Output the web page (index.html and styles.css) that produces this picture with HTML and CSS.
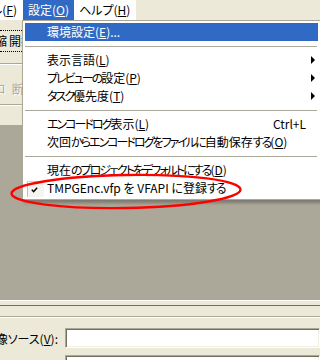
FILE: index.html
```html
<!DOCTYPE html>
<html>
<head>
    <meta charset="utf-8" />
    <title>TMPGEnc 設定メニュー</title>
    <link rel="stylesheet" href="styles.css">
</head>
<body>
    <div class="menubar">
        <div class="bar-items">
            <span class="bar-item first">ファイル(<u>F</u>)</span>
            <span class="bar-item open">設定(<u>O</u>)</span>
            <span class="bar-item">ヘルプ(<u>H</u>)</span>
        </div>
    </div>

    <div class="toolbar">
        <div class="tool-row buttons">
            <span class="tool-btn cut">圧縮</span>
            <span class="tool-btn">開始</span>
        </div>
        <div class="tool-sep"></div>
        <div class="tool-row disabled">
            <span class="tool-btn cut2">プロ</span>
            <span class="tool-btn">断</span>
        </div>
    </div>

    <div class="workspace"></div>

    <div class="panel">
        <div class="panel-strip"></div>
        <div class="panel-form">
            <div class="field">
                <label class="field-label">映像ソース(<u>V</u>):</label>
                <div class="field-input"></div>
            </div>
            <div class="field">
                <label class="field-label">音声ソース(<u>U</u>):</label>
                <div class="field-input"></div>
            </div>
        </div>
    </div>

    <!-- 設定メニュー (開いた状態) -->
    <div class="menu">
        <div class="item hot"><span class="check"></span><span class="label">環境設定(<u>E</u>)...</span><span class="sub"></span></div>
        <div class="sep"></div>
        <div class="item"><span class="check"></span><span class="label">表示言語(<u>L</u>)</span><span class="sub arrow"></span></div>
        <div class="item"><span class="check"></span><span class="label"><span class="k">プレビューの</span>設定(<u>P</u>)</span><span class="sub arrow"></span></div>
        <div class="item"><span class="check"></span><span class="label"><span class="k">タスク</span>優先度(<u>T</u>)</span><span class="sub arrow"></span></div>
        <div class="sep"></div>
        <div class="item"><span class="check"></span><span class="label"><span class="k">エンコードログ</span>表示(<u>L</u>)</span><span class="key">Ctrl+L</span><span class="sub"></span></div>
        <div class="item"><span class="check"></span><span class="label">次回<span class="k">からエンコードログをファイルに</span>自動保存<span class="k">する</span>(<u>O</u>)</span><span class="sub"></span></div>
        <div class="sep"></div>
        <div class="item"><span class="check"></span><span class="label">現在<span class="k">のプロジェクトをデフォルトにする</span>(<u>D</u>)</span><span class="sub"></span></div>
        <div class="item"><span class="check on"><svg width="7" height="6" viewBox="0 0 7 6"><polyline points="0.8,2.6 2.6,4.6 6.2,0.8" fill="none" stroke="#000" stroke-width="1.4"/></svg></span><span class="label">TMPGEnc.vfp を VFAPI に登録<span class="k">する</span></span><span class="sub"></span></div>
    </div>

    <svg class="mark" width="320" height="360" viewBox="0 0 320 360">
        <ellipse cx="126" cy="191.5" rx="114.5" ry="16.5" transform="rotate(-1 126 191.5)" fill="none" stroke="#f00" stroke-width="2.4"/>
    </svg>
</body>
</html>
```

FILE: styles.css
```css
* {
    box-sizing: border-box;
}

body {
    margin: 0;
    width: 320px;
    height: 360px;
    overflow: hidden;
    position: relative;
    background: #ece9d8;
    color: #000;
    font-family: "Noto Sans CJK JP", sans-serif;
    font-size: 12px;
    font-feature-settings: "palt";
}

u {
    text-decoration: underline;
    text-underline-offset: 1px;
}

/* menu bar */
.menubar {
    display: flex;
    height: 20px;
    background: #ece9d8;
}

.bar-items {
    display: flex;
    background: #fff;
    padding-right: 1px;
}

.bar-item {
    padding: 0 5px;
    line-height: 20px;
    white-space: nowrap;
}

/* 左端で切れている「ファイル」 */
.bar-item.first {
    width: 23px;
    padding: 0 6px 0 0;
    display: flex;
    justify-content: flex-end;
    overflow: hidden;
}

.bar-item.open {
    background: #316ac5;
    color: #fff;
}

/* window behind the menu */
.toolbar {
    height: 105px;
    padding-top: 10px;
}

.tool-row {
    display: flex;
    gap: 2px;
    white-space: nowrap;
}

.tool-row.buttons {
    height: 22px;
    line-height: 20px;
    border-top: 1px dotted #000;
    border-bottom: 1px dotted #000;
}

.tool-btn.cut {
    margin-left: -17px;
}

.tool-sep {
    margin-top: 11px;
    border-top: 1px solid #aca899;
    border-bottom: 1px solid #fff;
}

.tool-row.disabled {
    height: 40px;
    padding-top: 15px;
    line-height: 18px;
    color: #aca899;
    text-shadow: 1px 1px 0 #fff;
    border-bottom: 1px solid #aca899;
    box-shadow: 0 1px 0 #fff;
}

.tool-btn.cut2 {
    margin-left: -17px;
    margin-right: 4px;
}

.workspace {
    height: 175px;
    background: #aca899;
}

.panel {
    border-top: 1px solid #fff;
}

.panel-strip {
    height: 16px;
    border-top: 4px solid #ece9d8;
    border-bottom: 1px solid #aca899;
    box-shadow: inset 0 1px 0 #716f64;
}

.panel-form {
    border-top: 1px solid #fff;
    padding-top: 10px;
    display: flex;
    flex-direction: column;
    gap: 7px;
}

.field {
    display: flex;
    align-items: center;
    gap: 7px;
}

.field-label {
    width: 58px;
    flex: none;
    display: flex;
    justify-content: flex-end;
    white-space: nowrap;
}

.field-input {
    flex: 1;
    height: 20px;
    background: #fff;
    border-top: 1px solid #aca899;
    border-left: 1px solid #aca899;
    border-right: 1px solid #fff;
    border-bottom: 1px solid #fff;
    box-shadow: inset 1px 1px 0 #716f64, inset -1px -1px 0 #f1efe2;
}

/* dropdown */
.menu {
    position: absolute;
    left: 22px;
    top: 20px;
    width: 300px;
    background: #fff;
    border: 1px solid #aca899;
    padding: 2px 3px 2px 2px;
    box-shadow: 2px 3px 3px rgba(0, 0, 0, 0.28);
}

.item {
    display: flex;
    align-items: center;
    height: 18px;
    line-height: 18px;
    white-space: nowrap;
}

.item.hot {
    background: #316ac5;
    color: #fff;
}

.k {
    letter-spacing: -2px;
}

.check {
    width: 22px;
    flex: none;
    align-self: stretch;
}

.check.on {
    display: flex;
    align-items: center;
    justify-content: center;
    margin: 2px 3px 0 2px;
    width: 17px;
    background: #f5f4ee;
    border-top: 1px solid #d8d5c8;
    border-left: 1px solid #c2bfb2;
    padding-top: 1px;
    padding-right: 3px;
}

.label {
    flex: 1;
}

.key {
    flex: none;
}

.sub {
    width: 12px;
    flex: none;
    display: flex;
    padding-left: 5px;
}

.sub.arrow::after {
    content: "";
    border-left: 4px solid #000;
    border-top: 4px solid transparent;
    border-bottom: 4px solid transparent;
}

.sep {
    height: 1px;
    margin: 5px 1px 4px 0;
    background: #aca899;
}

.mark {
    position: absolute;
    left: 0;
    top: 0;
    pointer-events: none;
}
```
